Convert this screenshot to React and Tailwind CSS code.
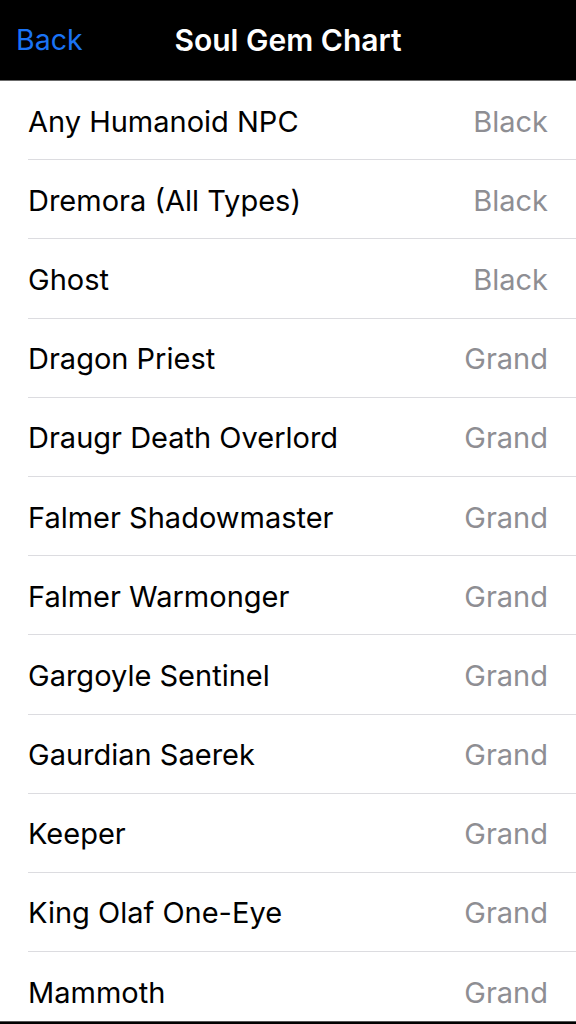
const rows = [
  ['Any Humanoid NPC', 'Black'],
  ['Dremora (All Types)', 'Black'],
  ['Ghost', 'Black'],
  ['Dragon Priest', 'Grand'],
  ['Draugr Death Overlord', 'Grand'],
  ['Falmer Shadowmaster', 'Grand'],
  ['Falmer Warmonger', 'Grand'],
  ['Gargoyle Sentinel', 'Grand'],
  ['Gaurdian Saerek', 'Grand'],
  ['Keeper', 'Grand'],
  ['King Olaf One-Eye', 'Grand'],
  ['Mammoth', 'Grand'],
]

export default function App() {
  return (
    <div className="h-[1024px] w-[576px] overflow-hidden flex flex-col bg-white" style={{ fontFamily: 'Inter, "Noto Sans", sans-serif' }}>
      <header className="h-[81px] shrink-0 bg-black border-b border-[#6b6b6b] flex items-center relative">
        <span className="pl-4 text-[28.5px] text-[#1a73f5] leading-none">Back</span>
        <span className="absolute left-0 right-0 text-center text-[30px] font-semibold text-white leading-none">Soul Gem Chart</span>
      </header>
      <div className="flex-1 overflow-hidden">
        {rows.map(([name, gem], i) => (
          <div key={name} className={`ml-[28px] h-[79.2px] flex items-center justify-between pr-[28px] pt-[2px] ${i < rows.length - 1 ? 'border-b border-[#dcdce0]' : ''}`}>
            <span className="text-[29px] text-black leading-none">{name}</span>
            <span className="text-[29px] text-[#8e8e93] leading-none">{gem}</span>
          </div>
        ))}
      </div>
      <div className="h-[3px] shrink-0 bg-black border-t border-[#555]" />
    </div>
  )
}
